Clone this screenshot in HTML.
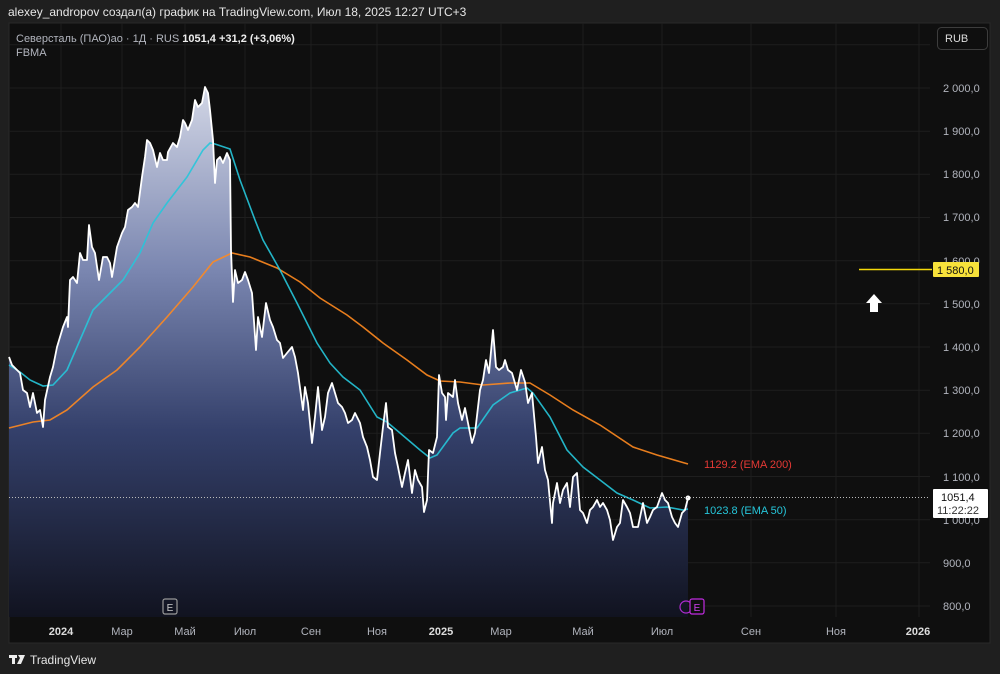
<!DOCTYPE html>
<html><head><meta charset="utf-8"><style>
html,body{margin:0;padding:0;background:#1f1f1f;width:1000px;height:674px;overflow:hidden;font-family:"Liberation Sans","DejaVu Sans",sans-serif;}
svg{position:absolute;left:0;top:0}
text{font-family:"Liberation Sans","DejaVu Sans",sans-serif}
</style></head><body>
<svg width="1000" height="674" viewBox="0 0 1000 674">
<defs>
<linearGradient id="fg" x1="0" y1="85" x2="0" y2="617" gradientUnits="userSpaceOnUse">
<stop offset="0" stop-color="#d3d7e6"/>
<stop offset="0.35" stop-color="#7a86b0"/>
<stop offset="0.65" stop-color="#34406b"/>
<stop offset="1" stop-color="#111320"/>
</linearGradient>
</defs>
<rect x="0" y="0" width="1000" height="674" fill="#1f1f1f"/>
<text x="8" y="16" fill="#e6e6e6" font-size="12">alexey_andropov создал(а) график на TradingView.com, Июл 18, 2025 12:27 UTC+3</text>
<rect x="9" y="23" width="981" height="620" fill="#0f0f0f" stroke="#2a2a2a"/>
<g stroke="#1e1e1e" stroke-width="1">
<line x1="9" x2="930" y1="44.8" y2="44.8"/><line x1="9" x2="930" y1="88" y2="88"/><line x1="9" x2="930" y1="131.2" y2="131.2"/><line x1="9" x2="930" y1="174.3" y2="174.3"/><line x1="9" x2="930" y1="217.5" y2="217.5"/><line x1="9" x2="930" y1="260.7" y2="260.7"/><line x1="9" x2="930" y1="303.8" y2="303.8"/><line x1="9" x2="930" y1="347" y2="347"/><line x1="9" x2="930" y1="390.2" y2="390.2"/><line x1="9" x2="930" y1="433.3" y2="433.3"/><line x1="9" x2="930" y1="476.5" y2="476.5"/><line x1="9" x2="930" y1="519.7" y2="519.7"/><line x1="9" x2="930" y1="562.8" y2="562.8"/><line x1="9" x2="930" y1="606" y2="606"/>
<line x1="61" x2="61" y1="23" y2="617"/><line x1="122" x2="122" y1="23" y2="617"/><line x1="185" x2="185" y1="23" y2="617"/><line x1="245" x2="245" y1="23" y2="617"/><line x1="311" x2="311" y1="23" y2="617"/><line x1="377" x2="377" y1="23" y2="617"/><line x1="441" x2="441" y1="23" y2="617"/><line x1="501" x2="501" y1="23" y2="617"/><line x1="583" x2="583" y1="23" y2="617"/><line x1="662" x2="662" y1="23" y2="617"/><line x1="751" x2="751" y1="23" y2="617"/><line x1="836" x2="836" y1="23" y2="617"/><line x1="919" x2="919" y1="23" y2="617"/>
</g>
<polygon fill="url(#fg)" points="9,357 12,365 17,370 20,373 23,390 27,393 30,407 33,393 37,413 40,410 43,427 45,400 50,377 53,367 57,347 60,337 63,327 67,317 68,327 70,280 73,277 77,283 80,253 83,260 87,260 89,225 92,247 95,253 99,280 103,257 107,257 110,263 112,277 117,247 122,233 125,227 128,210 132,207 135,203 138,207 142,177 145,157 147,140 150,143 153,150 157,167 160,153 163,160 167,160 168,152 173,143 177,147 180,137 183,120 185,123 188,130 192,120 195,100 198,107 202,103 205,87 208,93 210,110 213,140 215,183 217,160 220,157 223,163 227,153 230,160 231,250 233,302 235,270 238,283 242,280 245,272 248,280 252,293 256,350 258,317 262,337 266,303 270,320 273,327 277,340 280,343 283,358 287,353 292,347 295,357 298,373 303,410 305,387 308,403 312,443 315,417 318,387 322,430 325,417 328,393 332,383 335,393 338,403 342,407 345,413 348,423 352,420 355,413 360,423 363,437 367,447 370,460 373,477 377,480 380,453 383,427 386,403 388,427 392,430 395,453 398,467 402,487 405,473 408,460 412,493 415,470 418,480 422,487 424,512 427,500 429,450 433,453 437,437 439,375 442,393 445,397 446,420 448,393 453,397 455,380 458,403 462,420 465,408 468,423 472,443 475,433 480,390 483,380 486,360 489,373 493,330 496,367 499,370 503,367 505,360 508,370 512,373 517,390 521,370 525,382 528,403 532,393 536,437 538,463 542,447 545,470 548,480 552,523 553,503 557,483 560,503 563,490 567,483 570,507 573,477 577,473 580,510 583,513 587,523 590,510 593,507 597,500 600,507 603,503 607,510 610,520 613,540 617,527 620,523 623,500 627,507 630,513 633,527 638,527 643,503 647,523 650,517 653,510 657,507 662,493 665,500 668,503 672,517 675,523 678,527 682,513 685,510 688,498 688,617 9,617"/>
<polyline fill="none" stroke="#ff8a1f" stroke-opacity="0.9" stroke-width="1.6" points="9,428 33,422 50,420 67,410 93,387 117,370 140,347 167,317 193,287 213,262 232,253 250,257 277,268 300,282 320,298 347,315 363,327 383,343 407,360 427,375 440,381 460,382 483,385 510,383 530,383 550,395 573,410 600,425 633,447 657,455 688,464"/>
<polyline fill="none" stroke="#26c6da" stroke-opacity="0.9" stroke-width="1.6" points="9,365 20,372 30,380 43,386 53,385 67,370 80,340 93,310 110,293 123,280 140,253 153,223 167,203 187,177 203,150 210,143 215,144 230,149 240,180 255,220 263,240 280,270 297,303 317,343 330,363 343,377 360,390 377,417 387,422 400,433 420,450 430,458 437,455 453,433 460,428 477,428 493,405 510,393 527,388 533,393 550,417 567,450 583,467 600,480 617,493 633,500 650,508 667,507 683,510 688,509"/>
<polyline fill="none" stroke="#ffffff" stroke-width="1.8" stroke-linejoin="round" points="9,357 12,365 17,370 20,373 23,390 27,393 30,407 33,393 37,413 40,410 43,427 45,400 50,377 53,367 57,347 60,337 63,327 67,317 68,327 70,280 73,277 77,283 80,253 83,260 87,260 89,225 92,247 95,253 99,280 103,257 107,257 110,263 112,277 117,247 122,233 125,227 128,210 132,207 135,203 138,207 142,177 145,157 147,140 150,143 153,150 157,167 160,153 163,160 167,160 168,152 173,143 177,147 180,137 183,120 185,123 188,130 192,120 195,100 198,107 202,103 205,87 208,93 210,110 213,140 215,183 217,160 220,157 223,163 227,153 230,160 231,250 233,302 235,270 238,283 242,280 245,272 248,280 252,293 256,350 258,317 262,337 266,303 270,320 273,327 277,340 280,343 283,358 287,353 292,347 295,357 298,373 303,410 305,387 308,403 312,443 315,417 318,387 322,430 325,417 328,393 332,383 335,393 338,403 342,407 345,413 348,423 352,420 355,413 360,423 363,437 367,447 370,460 373,477 377,480 380,453 383,427 386,403 388,427 392,430 395,453 398,467 402,487 405,473 408,460 412,493 415,470 418,480 422,487 424,512 427,500 429,450 433,453 437,437 439,375 442,393 445,397 446,420 448,393 453,397 455,380 458,403 462,420 465,408 468,423 472,443 475,433 480,390 483,380 486,360 489,373 493,330 496,367 499,370 503,367 505,360 508,370 512,373 517,390 521,370 525,382 528,403 532,393 536,437 538,463 542,447 545,470 548,480 552,523 553,503 557,483 560,503 563,490 567,483 570,507 573,477 577,473 580,510 583,513 587,523 590,510 593,507 597,500 600,507 603,503 607,510 610,520 613,540 617,527 620,523 623,500 627,507 630,513 633,527 638,527 643,503 647,523 650,517 653,510 657,507 662,493 665,500 668,503 672,517 675,523 678,527 682,513 685,510 688,498"/>
<circle cx="688" cy="498" r="2.5" fill="#fff"/>
<line x1="9" x2="930" y1="497.5" y2="497.5" stroke="#bbb" stroke-width="1" stroke-dasharray="1,2"/>
<text x="704" y="468" fill="#e53935" font-size="11">1129.2 (EMA 200)</text>
<text x="704" y="514" fill="#26c6da" font-size="11">1023.8 (EMA 50)</text>
<line x1="859" x2="932" y1="269.5" y2="269.5" stroke="#f5d90a" stroke-width="1.5"/>
<polygon points="874,294 866,303 870,303 870,312 878,312 878,303 882,303" fill="#fff"/>
<rect x="163" y="599" width="14" height="15" rx="2" fill="none" stroke="#999" stroke-width="1.2"/>
<text x="170" y="611" fill="#ccc" font-size="10" text-anchor="middle">E</text>
<circle cx="686" cy="607" r="6" fill="none" stroke="#b02bd1" stroke-width="1.2"/>
<rect x="690" y="599" width="14" height="15" rx="2" fill="#0f0f0f" stroke="#c02be0" stroke-width="1.2"/>
<text x="697" y="611" fill="#d040f0" font-size="10" text-anchor="middle">E</text>
<g fill="#b2b5be" font-size="11">
<text x="943" y="92">2 000,0</text><text x="943" y="135">1 900,0</text><text x="943" y="178">1 800,0</text><text x="943" y="221">1 700,0</text><text x="943" y="265">1 600,0</text><text x="943" y="308">1 500,0</text><text x="943" y="351">1 400,0</text><text x="943" y="394">1 300,0</text><text x="943" y="437">1 200,0</text><text x="943" y="481">1 100,0</text><text x="943" y="524">1 000,0</text><text x="943" y="567">900,0</text><text x="943" y="610">800,0</text>
</g>
<rect x="933" y="262" width="46" height="15" rx="1" fill="#f7e13a"/>
<text x="937" y="274" fill="#111" font-size="11">1 580,0</text>
<rect x="933" y="489" width="55" height="29" rx="1" fill="#fff"/>
<text x="941" y="501" fill="#111" font-size="11">1051,4</text>
<text x="937" y="514" fill="#333" font-size="11">11:22:22</text>
<rect x="937.5" y="27.5" width="50" height="22" rx="4" fill="none" stroke="#3d3d3d"/>
<text x="945" y="42" fill="#ddd" font-size="11">RUB</text>
<g fill="#b2b5be" font-size="11" text-anchor="middle">
<text x="61" y="635" font-weight="bold" fill="#ddd">2024</text><text x="122" y="635">Мар</text><text x="185" y="635">Май</text><text x="245" y="635">Июл</text><text x="311" y="635">Сен</text><text x="377" y="635">Ноя</text><text x="441" y="635" font-weight="bold" fill="#ddd">2025</text><text x="501" y="635">Мар</text><text x="583" y="635">Май</text><text x="662" y="635">Июл</text><text x="751" y="635">Сен</text><text x="836" y="635">Ноя</text><text x="918" y="635" font-weight="bold" fill="#ddd">2026</text>
</g>
<text x="16" y="42" fill="#b2b5be" font-size="11">Северсталь (ПАО)ао · 1Д · RUS <tspan fill="#eee" font-weight="bold">  1051,4  +31,2 (+3,06%)</tspan></text>
<text x="16" y="56" fill="#b2b5be" font-size="11">FBMA</text>
<g fill="#eee">
<rect x="9" y="655" width="8" height="3"/><rect x="12" y="655" width="3" height="9"/>
<polygon points="18,655 25,655 21,664 17,664 20,658"/>
</g>
<text x="30" y="664" fill="#e6e6e6" font-size="12">TradingView</text>
</svg>
</body></html>
